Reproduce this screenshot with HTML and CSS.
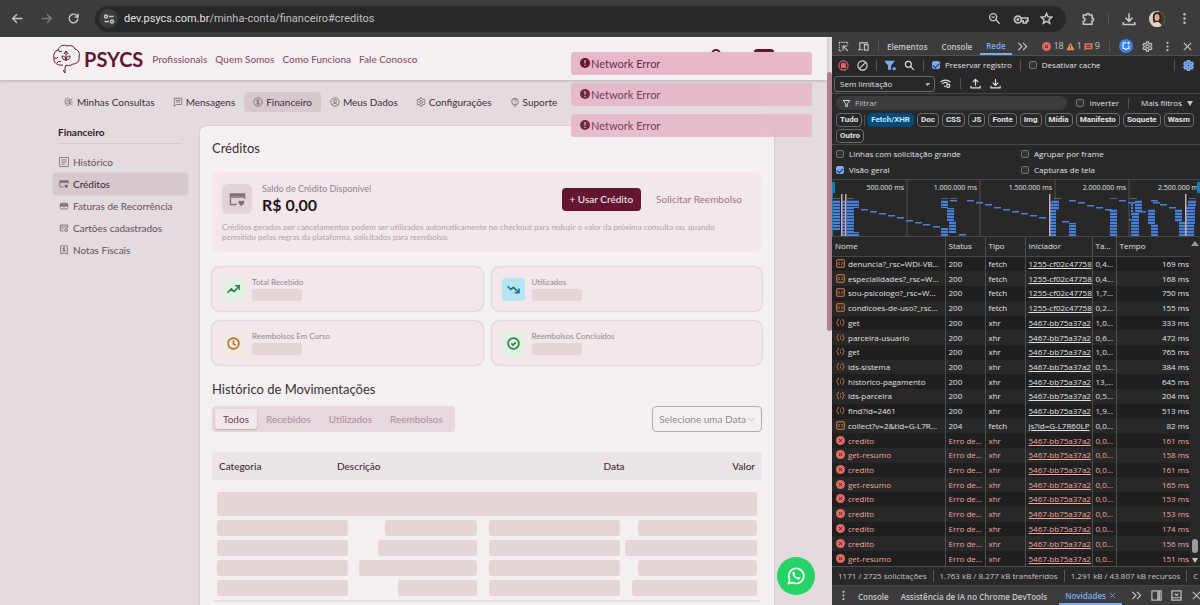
FILE: index.html
```html
<!DOCTYPE html>
<html lang="pt-BR">
<head>
  <meta charset="UTF-8">
  <meta name="viewport" content="width=device-width, initial-scale=1.0">
  <title>PSYCS - Créditos</title>
  <link rel="stylesheet" href="styles.css">
</head>
<body>
  <svg class="sprite" xmlns="http://www.w3.org/2000/svg">
    <symbol id="i-back" viewBox="0 0 24 24"><path d="M21 12H4M11 4l-8 8 8 8"/></symbol>
    <symbol id="i-reload" viewBox="0 0 24 24"><path d="M20 12a8 8 0 1 1-2.500-5.800L20 9M20.500 3v6.500H14"/></symbol>
    <symbol id="i-tune" viewBox="0 0 24 24"><circle cx="6" cy="7" r="3"/><path d="M12 7h9M3 17h9"/><circle cx="18" cy="17" r="3"/></symbol>
    <symbol id="i-search" viewBox="0 0 24 24"><circle cx="9.500" cy="9.500" r="6.500"/><path d="M14.500 14.500l7 7"/></symbol>
    <symbol id="i-zoom" viewBox="0 0 24 24"><circle cx="9.500" cy="9.500" r="6.500"/><path d="M14.500 14.500l7 7M6.500 9.500h6"/></symbol>
    <symbol id="i-key" viewBox="0 0 24 24"><circle cx="7" cy="12" r="5.500"/><circle cx="7" cy="12" r="1"/><path d="M12 9.500h11v5h-2.500v3h-5v-3H12"/></symbol>
    <symbol id="i-star" viewBox="0 0 24 24"><path d="M12 2.500l2.800 6.300 6.900.7-5.200 4.600 1.500 6.800-6-3.500-6 3.500 1.500-6.800-5.200-4.600 6.900-.7z"/></symbol>
    <symbol id="i-puzzle" viewBox="0 0 24 24"><path d="M4 5h5.500a2.500 2.500 0 0 1 5 0H19v5.500a2.500 2.500 0 0 1 0 5V21H4v-5a3 3 0 0 0 0-6z"/></symbol>
    <symbol id="i-down" viewBox="0 0 24 24"><path d="M12 2v13M6 10l6 6 6-6M2 17v4.500h20V17"/></symbol>
    <symbol id="i-up" viewBox="0 0 24 24"><path d="M12 17V3M6 9l6-6 6 6M2 17v4.500h20V17"/></symbol>
    <symbol id="i-dots" viewBox="0 0 24 24"><g fill="currentColor" stroke="none"><circle cx="12" cy="4" r="2.300"/><circle cx="12" cy="12" r="2.300"/><circle cx="12" cy="20" r="2.300"/></g></symbol>
    <symbol id="i-close" viewBox="0 0 24 24"><path d="M4 4l16 16M20 4L4 20"/></symbol>
    <symbol id="i-inspect" viewBox="0 0 24 24"><path d="M2 3h20M3 3v20M21 3v6M3 21h6" stroke-dasharray="3 2"/><path d="M11 20v-9h9M11 11l11 11"/></symbol>
    <symbol id="i-device" viewBox="0 0 24 24"><path d="M4 18V4h18M0 19h11"/><rect x="14" y="8" width="8" height="12"/></symbol>
    <symbol id="i-chevrons" viewBox="0 0 24 24"><path d="M3 4l8 8-8 8M13 4l8 8-8 8"/></symbol>
    <symbol id="i-gear" viewBox="0 0 24 24"><path d="M10 2h4l.7 3 2 1.200 3-1 2 3.500-2.300 2v2.600l2.300 2-2 3.500-3-1-2 1.200-.7 3h-4l-.7-3-2-1.200-3 1-2-3.500 2.300-2v-2.600l-2.300-2 2-3.500 3 1 2-1.200z"/><circle cx="12" cy="12" r="3.500"/></symbol>
    <symbol id="i-record" viewBox="0 0 24 24"><circle cx="12" cy="12" r="10"/><rect x="8" y="8" width="8" height="8" fill="currentColor"/></symbol>
    <symbol id="i-clear" viewBox="0 0 24 24"><circle cx="12" cy="12" r="10"/><path d="M19 5L5 19"/></symbol>
    <symbol id="i-funnel" viewBox="0 0 24 24"><path d="M3 4h18l-7 9v7h-4v-7z"/></symbol>
    <symbol id="i-funnel-on" viewBox="0 0 24 24"><path d="M1 3h18l-7 9v8H8v-8z" fill="currentColor"/><circle cx="20" cy="19" r="3.500" fill="currentColor" stroke="none"/></symbol>
    <symbol id="i-wifi" viewBox="0 0 24 24"><path d="M1 9c6-6 16-6 22 0M5 13c4-4 9-4 12-1.500M9 17l3 3"/><circle cx="18" cy="17" r="3.500"/></symbol>
    <symbol id="i-error" viewBox="0 0 24 24"><circle cx="12" cy="12" r="12" fill="#e46962" stroke="none"/><path d="M8 8l8 8M16 8l-8 8" stroke="#282828"/></symbol>
    <symbol id="i-doc" viewBox="0 0 24 24"><rect x="2" y="2" width="20" height="20" rx="1"/><path d="M10 8l-4 4 4 4M14 8l4 4-4 4"/></symbol>
    <symbol id="i-json" viewBox="0 0 24 24"><path d="M8 3c-5 0-2 7-6 9 4 2 1 9 6 9M16 3c5 0 2 7 6 9-4 2-1 9-6 9"/><path d="M12 7v3M12 13v4"/></symbol>
    <symbol id="i-panel" viewBox="0 0 24 24"><rect x="2" y="2" width="20" height="20"/><path d="M15 2v20M18 2v20"/></symbol>
    <symbol id="i-drawer" viewBox="0 0 24 24"><rect x="2" y="2" width="20" height="20"/><path d="M2 17h20M8 8l4 4 4-4"/></symbol>
    <symbol id="i-psi" viewBox="0 0 24 24"><path d="M9 2C4 3 2 7 3 12c0 5 2 8 6 9M12 3v18M12 7h5l3-3M12 12h9M12 16h5l3 4M8 7v4M7 14v3"/></symbol>
    <symbol id="i-chat" viewBox="0 0 24 24"><path d="M3 3h18v15H8l-5 4zM7 8h10M7 12h10"/></symbol>
    <symbol id="i-coin" viewBox="0 0 24 24"><circle cx="12" cy="12" r="10"/><path d="M15.500 8.500c-1-2-7-2-7 1s7 2 7 5-6 3.500-7.500 1M12 5v14"/></symbol>
    <symbol id="i-user" viewBox="0 0 24 24"><circle cx="12" cy="12" r="10"/><circle cx="12" cy="10" r="3.500"/><path d="M5.500 19c2-5 11-5 13 0"/></symbol>
    <symbol id="i-help" viewBox="0 0 24 24"><circle cx="12" cy="11" r="8"/><path d="M9.500 8c1-3 6-2 5 1-.5 1.500-2.500 2-2.500 4M12 15v1M9 20l3 3 3-3"/></symbol>
    <symbol id="i-list" viewBox="0 0 24 24"><rect x="1" y="1" width="22" height="22" rx="1"/><path d="M6 7h12M6 12h12M6 17h8"/></symbol>
    <symbol id="i-card" viewBox="0 0 24 24"><path d="M11 19H2V4h20v7M2 8.500h20M2 6h20"/><path d="M17.500 21.500c-6-4-4.500-8 -2-8 1.200 0 2 1.300 2 1.300s.8-1.300 2-1.300c2.500 0 4 4-2 8z" fill="currentColor" stroke="none"/></symbol>
    <symbol id="i-invoice" viewBox="0 0 24 24"><rect x="3" y="5" width="18" height="14" rx="3"/><path d="M3 8h18M3 11h5l1 2h6l1-2h5" stroke-width="3"/></symbol>
    <symbol id="i-cardgear" viewBox="0 0 24 24"><path d="M11 19H3V5h18v6M3 9.500h18M6 14h4"/><circle cx="17" cy="17" r="3.500"/><path d="M17 12v2M17 20v2"/></symbol>
    <symbol id="i-receipt" viewBox="0 0 24 24"><path d="M4 2h16v20l-3-2H7l-3 2z"/><path d="M15 7.500c-1-1.500-6-1.500-6 1s6 2 6 4.500-5 3-6.500 1M12 5v12"/></symbol>
    <symbol id="i-trendup" viewBox="0 0 24 24"><path d="M1 18l7-7 5 5 9-10M15 5h8v8"/></symbol>
    <symbol id="i-trenddown" viewBox="0 0 24 24"><path d="M1 6l6 6 5-4 9 9M22 10v8h-8"/></symbol>
    <symbol id="i-clock" viewBox="0 0 24 24"><circle cx="12" cy="12" r="10"/><path d="M12 6v7l4 2"/></symbol>
    <symbol id="i-check" viewBox="0 0 24 24"><circle cx="12" cy="12" r="10"/><path d="M8 12l3 3 5-5"/></symbol>
    <symbol id="i-alert" viewBox="0 0 24 24"><circle cx="12" cy="12" r="12" fill="#641532" stroke="none"/><path d="M12 5v8M12 16v3" stroke="#e6b8ca" stroke-width="3"/></symbol>
  </svg>

  <div class="toolbar">
    <button class="icon-btn" aria-label="Voltar"><svg><use href="#i-back"/></svg></button>
    <button class="icon-btn dim flip" aria-label="Avançar"><svg><use href="#i-back"/></svg></button>
    <button class="icon-btn" aria-label="Recarregar"><svg><use href="#i-reload"/></svg></button>
    <div class="omnibox">
      <span class="site-info"><svg><use href="#i-tune"/></svg></span>
      <span class="url">dev.psycs.com.br<span class="path">/minha-conta/financeiro#creditos</span></span>
      <button class="icon-btn" aria-label="Zoom"><svg><use href="#i-zoom"/></svg></button>
      <button class="icon-btn wide" aria-label="Senhas"><svg><use href="#i-key"/></svg></button>
      <button class="icon-btn" aria-label="Favoritos"><svg><use href="#i-star"/></svg></button>
    </div>
    <div class="toolbar-end">
      <button class="icon-btn big" aria-label="Extensões"><svg><use href="#i-puzzle"/></svg></button>
      <span class="bar"></span>
      <button class="icon-btn big" aria-label="Downloads"><svg><use href="#i-down"/></svg></button>
      <svg class="avatar" viewBox="0 0 16 16">
        <defs><clipPath id="face"><circle cx="8" cy="8" r="8"/></clipPath></defs>
        <g clip-path="url(#face)">
          <rect width="16" height="16" fill="#d9cfc9"/>
          <rect x="10" width="6" height="16" fill="#37402f"/>
          <path d="M4 9C3 2 6 1 8 1s5 2 4 9l-1 3H5z" fill="#3a1d1a"/>
          <ellipse cx="8" cy="6.500" rx="2.500" ry="3.500" fill="#e0a893"/>
          <path d="M3 16c0-4 3-5 5-5s4 1 5 5z" fill="#e8d5cc"/>
        </g>
      </svg>
      <button class="icon-btn" aria-label="Menu"><svg><use href="#i-dots"/></svg></button>
    </div>
  </div>

  <div class="window">
    <div class="page">
      <header class="site-header">
        <a class="logo" href="#">
          <svg viewBox="0 0 27 30">
            <path d="M10 21C4 22 0 18 1 14c-1-4 1-7 4-8 1-4 6-6 9-4 4-1 7 0 8 3 4 1 5 5 4 8 1 4-2 7-6 7-3 2-6 2-7 1l-1 3v5l-2-3M5 6c1 2 3 2 4 1M1 14c2 1 3 0 4-1M4 19c1-2 3-2 4-1"/>
            <path d="M13 17V8M13 16c-3 0-4-2-4-4 2 0 4 1 4 4 0-3 2-4 4-4 0 2-1 4-4 4M11 10l2-3 2 3"/>
          </svg>
          <span>PSYCS</span>
        </a>
        <nav class="main-nav">
          <a href="#">Profissionais</a>
          <a href="#">Quem Somos</a>
          <a href="#">Como Funciona</a>
          <a href="#">Fale Conosco</a>
        </nav>
        <div class="header-actions">
          <svg viewBox="0 0 10 20"><path d="M1 14V5a4 4 0 0 1 8 0v9z"/></svg>
          <button class="menu-btn" aria-label="Abrir menu"></button>
        </div>
      </header>

      <nav class="account-nav">
        <a href="#"><svg><use href="#i-psi"/></svg>Minhas Consultas</a>
        <a href="#"><svg><use href="#i-chat"/></svg>Mensagens</a>
        <a href="#" class="active"><svg><use href="#i-coin"/></svg>Financeiro</a>
        <a href="#"><svg><use href="#i-user"/></svg>Meus Dados</a>
        <a href="#"><svg><use href="#i-gear"/></svg>Configurações</a>
        <a href="#"><svg><use href="#i-help"/></svg>Suporte</a>
      </nav>

      <div class="content">
        <aside class="sidebar">
          <h2>Financeiro</h2>
          <a href="#"><svg><use href="#i-list"/></svg>Histórico</a>
          <a href="#" class="active"><svg><use href="#i-card"/></svg>Créditos</a>
          <a href="#"><svg><use href="#i-invoice"/></svg>Faturas de Recorrência</a>
          <a href="#"><svg><use href="#i-cardgear"/></svg>Cartões cadastrados</a>
          <a href="#"><svg><use href="#i-receipt"/></svg>Notas Fiscais</a>
        </aside>

        <main class="panel">
          <h1>Créditos</h1>
          <section class="balance">
            <div class="balance-top">
              <span class="balance-icon"><svg><use href="#i-card"/></svg></span>
              <div class="balance-text">
                <p class="label">Saldo de Crédito Disponível</p>
                <p class="amount">R$ 0,00</p>
              </div>
              <button class="primary">+ Usar Crédito</button>
              <button class="ghost">Solicitar Reembolso</button>
            </div>
            <p class="note">Créditos gerados por cancelamentos podem ser utilizados automaticamente no checkout para reduzir o valor da próxima consulta ou, quando permitido pelas regras da plataforma, solicitados para reembolso.</p>
          </section>

          <section class="stats">
            <div class="stat"><span class="stat-icon green"><svg><use href="#i-trendup"/></svg></span><div><p>Total Recebido</p><span class="skel"></span></div></div>
            <div class="stat"><span class="stat-icon blue"><svg><use href="#i-trenddown"/></svg></span><div><p>Utilizados</p><span class="skel"></span></div></div>
            <div class="stat"><span class="stat-icon orange"><svg><use href="#i-clock"/></svg></span><div><p>Reembolsos Em Curso</p><span class="skel"></span></div></div>
            <div class="stat"><span class="stat-icon green"><svg><use href="#i-check"/></svg></span><div><p>Reembolsos Concluídos</p><span class="skel"></span></div></div>
          </section>

          <h1>Histórico de Movimentações</h1>
          <div class="filters">
            <div class="tabs">
              <button class="active">Todos</button>
              <button>Recebidos</button>
              <button>Utilizados</button>
              <button>Reembolsos</button>
            </div>
            <button class="date-btn">Selecione uma Data<svg viewBox="0 0 24 24"><path d="M3 8l9 9 9-9"/></svg></button>
          </div>

          <table class="moves">
            <thead>
              <tr><th>Categoria</th><th>Descrição</th><th>Data</th><th>Valor</th></tr>
            </thead>
          </table>
          <div class="loading" id="loading">
            <span class="skel head"></span>
          </div>
        </main>
      </div>

      <div class="toasts">
        <div class="toast"><svg><use href="#i-alert"/></svg>Network Error</div>
        <div class="toast faded"><svg><use href="#i-alert"/></svg>Network Error</div>
        <div class="toast faded"><svg><use href="#i-alert"/></svg>Network Error</div>
      </div>
      <a class="whatsapp" href="#" aria-label="WhatsApp">
        <svg viewBox="0 0 24 24"><path d="M3 21l1.400-4.800A9 9 0 1 1 8 19.800z" fill="none" stroke="#fff" stroke-width="2"/><path d="M8.500 7c-1.500 1-1.200 3 .8 5.700 2 2.600 4.800 4 6.500 3.300 1-.4 1.500-1.500 1.200-2l-2.300-1.200-1.200 1.300c-1.600-.5-2.800-1.800-3.400-3.200l.9-1.200L10 7.200z" fill="#fff"/></svg>
      </a>
      <div class="scrollbar"></div>
    </div>

    <div class="devtools">
      <div class="dt-row dt-tabs">
        <svg><use href="#i-inspect"/></svg>
        <svg><use href="#i-device"/></svg>
        <span class="bar"></span>
        <button>Elementos</button>
        <button>Console</button>
        <button class="active">Rede</button>
        <svg><use href="#i-chevrons"/></svg>
        <div class="counts">
          <svg><use href="#i-error"/></svg>18
          <svg viewBox="0 0 24 24"><path d="M12 2l11 20H1z" fill="#ee9255" stroke="none"/><path d="M12 9v6M12 17v2" stroke="#333"/></svg>1
          <svg viewBox="0 0 24 24"><path d="M1 3h22v16H7l-6 4z" fill="#e46962" stroke="none"/><path d="M6 9h12M6 14h12" stroke="#333"/></svg>9
        </div>
        <span class="bar"></span>
        <span class="ai"><svg viewBox="0 0 24 24"><path d="M13 4H5v14h4l3 3 3-3h4v-7M18 2v6M15 5h6"/></svg></span>
        <svg><use href="#i-gear"/></svg>
        <svg><use href="#i-dots"/></svg>
        <svg><use href="#i-close"/></svg>
      </div>

      <div class="dt-row dt-tools">
        <svg class="red"><use href="#i-record"/></svg>
        <svg><use href="#i-clear"/></svg>
        <span class="bar"></span>
        <svg class="accent"><use href="#i-funnel-on"/></svg>
        <svg><use href="#i-search"/></svg>
        <span class="bar"></span>
        <label><input type="checkbox" checked>Preservar registro</label>
        <span class="bar"></span>
        <label><input type="checkbox">Desativar cache</label>
        <span class="bar push"></span>
        <svg class="accent settings"><use href="#i-gear"/></svg>
      </div>

      <div class="dt-row dt-throttle">
        <select aria-label="Limitação"><option>Sem limitação</option></select>
        <svg><use href="#i-wifi"/></svg>
        <span class="bar"></span>
        <svg><use href="#i-up"/></svg>
        <svg><use href="#i-down"/></svg>
      </div>

      <div class="dt-filter">
        <div class="dt-row">
          <span class="search"><svg><use href="#i-funnel"/></svg><input type="text" placeholder="Filtrar" aria-label="Filtrar"></span>
          <label><input type="checkbox">Inverter</label>
          <span class="bar"></span>
          <button class="more">Mais filtros<span class="caret"></span></button>
        </div>
        <div class="chips">
          <button>Tudo</button><span class="bar"></span><button class="active">Fetch/XHR</button><button>Doc</button><button>CSS</button><button>JS</button><button>Fonte</button><button>Img</button><button>Mídia</button><button>Manifesto</button><button>Soquete</button><button>Wasm</button><button>Outro</button>
        </div>
      </div>

      <div class="dt-options">
        <label><input type="checkbox">Linhas com solicitação grande</label>
        <label><input type="checkbox">Agrupar por frame</label>
        <label><input type="checkbox" checked>Visão geral</label>
        <label><input type="checkbox">Capturas de tela</label>
      </div>

      <div class="timeline">
        <div class="ticks"><span>500.000 ms</span><span>1.000.000 ms</span><span>1.500.000 ms</span><span>2.000.000 ms</span><span>2.500.000 m</span></div>
        <svg id="bars" viewBox="0 0 368 56" preserveAspectRatio="none">
          <defs><pattern id="stripes" width="8" height="3" patternUnits="userSpaceOnUse"><rect width="8" height="2" fill="#4a80d8"/><rect y="2" width="8" height="1" fill="#2b3f63"/></pattern></defs>
        </svg>
      </div>

      <div class="requests">
        <div class="grid">
          <table>
            <thead><tr><th class="c-name">Nome</th><th class="c-status">Status</th><th class="c-type">Tipo</th><th class="c-init">Iniciador</th><th class="c-size">Ta...</th><th>Tempo</th></tr></thead>
            <tbody id="rows"></tbody>
          </table>
        </div>
        <div class="grid-scroll"><span class="arrow-up"></span><span class="thumb"></span><span class="arrow-down"></span></div>
      </div>

      <div class="dt-status"><span>1171 / 2725 solicitações</span><span>1.763 kB / 8.277 kB transferidos</span><span>1.291 kB / 43.807 kB recursos</span><span>C</span></div>

      <div class="dt-row dt-drawer">
        <svg><use href="#i-dots"/></svg>
        <button>Console</button>
        <button>Assistência de IA no Chrome DevTools</button>
        <button class="active">Novidades<svg><use href="#i-close"/></svg></button>
        <svg><use href="#i-chevrons"/></svg>
        <svg><use href="#i-panel"/></svg>
        <svg><use href="#i-drawer"/></svg>
        <svg><use href="#i-close"/></svg>
      </div>
    </div>
  </div>

  <script>
    const A = '1255-cf02c47758', B = '5467-bb75a37a2';
    const requests = [
      ['denuncia?_rsc=WDi-VB...', '200', 'fetch', A, '0,4...', '169 ms'],
      ['especialidades?_rsc=W...', '200', 'fetch', A, '0,4...', '168 ms'],
      ['sou-psicologo?_rsc=W...', '200', 'fetch', A, '1,7...', '750 ms'],
      ['condicoes-de-uso?_rsc...', '200', 'fetch', A, '0,2...', '155 ms'],
      ['get', '200', 'xhr', B, '1,0...', '333 ms'],
      ['parceira-usuario', '200', 'xhr', B, '0,6...', '472 ms'],
      ['get', '200', 'xhr', B, '1,0...', '765 ms'],
      ['ids-sistema', '200', 'xhr', B, '0,5...', '384 ms'],
      ['historico-pagamento', '200', 'xhr', B, '13,...', '645 ms'],
      ['ids-parceira', '200', 'xhr', B, '0,5...', '204 ms'],
      ['find?id=2461', '200', 'xhr', B, '1,9...', '513 ms'],
      ['collect?v=2&tid=G-L7R...', '204', 'fetch', 'js?id=G-L7R60LP', '0,0...', '82 ms'],
      ['credito', 'Erro de...', 'xhr', B, '0,0...', '161 ms'],
      ['get-resumo', 'Erro de...', 'xhr', B, '0,0...', '158 ms'],
      ['credito', 'Erro de...', 'xhr', B, '0,0...', '161 ms'],
      ['get-resumo', 'Erro de...', 'xhr', B, '0,0...', '165 ms'],
      ['credito', 'Erro de...', 'xhr', B, '0,0...', '153 ms'],
      ['credito', 'Erro de...', 'xhr', B, '0,0...', '153 ms'],
      ['credito', 'Erro de...', 'xhr', B, '0,0...', '174 ms'],
      ['credito', 'Erro de...', 'xhr', B, '0,0...', '156 ms'],
      ['get-resumo', 'Erro de...', 'xhr', B, '0,0...', '151 ms']
    ];

    const rows = document.getElementById('rows');
    requests.forEach(r => {
      const failed = r[1].startsWith('Erro');
      const icon = failed ? 'error' : r[2] === 'fetch' ? 'doc' : 'json';
      const tr = document.createElement('tr');
      if (failed) tr.className = 'failed';
      r.forEach((value, i) => {
        const td = document.createElement('td');
        if (i === 0) td.innerHTML = `<svg><use href="#i-${icon}"/></svg>`;
        const text = document.createElement(i === 3 ? 'a' : 'span');
        if (i === 3) text.href = '#';
        text.textContent = value;
        td.appendChild(text);
        tr.appendChild(td);
      });
      rows.appendChild(tr);
    });

    // timeline: blocks are [x, y, width, height], dashes are [x, y]
    const blocks = [[1,20,7,30],[10,20,4,36],[15,20,7,36],[20,20,7,8],[20,52,7,4],[109,20,7,8],[115,28,7,13],[117,41,7,12],[109,48,7,8],[217,22,7,34],[220,20,7,10],[237,43,7,13],[278,29,7,27],[299,22,2,13],[303,20,7,12],[300,32,7,9],[299,41,8,15],[316,29,7,15],[319,44,7,12],[343,29,7,13],[347,42,7,14],[356,20,8,6],[354,26,9,18],[354,44,8,12]];
    const dashes = [[29,29],[38,31],[47,33],[56,35],[65,37],[74,40],[83,42],[91,44],[101,46],[118,20],[127,54],[135,20],[144,22],[153,24],[162,27],[171,29],[180,31],[189,33],[198,35],[207,37],[230,41],[237,20],[246,22],[255,25],[264,27],[273,29],[287,20],[296,22],[297,39],[307,31],[319,20],[321,22],[328,24],[337,27]];
    const grays = [[1,18],[15,18],[109,18],[118,18],[222,18],[278,18],[298,18],[357,18]];
    const bars = document.getElementById('bars');
    function rect(x, y, width, height, fill) {
      const el = document.createElementNS('http://www.w3.org/2000/svg', 'rect');
      Object.entries({ x, y, width, height, fill }).forEach(([k, v]) => el.setAttribute(k, v));
      bars.appendChild(el);
    }
    blocks.forEach(b => rect(...b, 'url(#stripes)'));
    dashes.forEach(([x, y]) => rect(x, y, 7, 1.5, '#4a80d8'));
    grays.forEach(([x, y]) => rect(x, y, 7, 1, '#666'));
    [9, 13, 217, 353].forEach(x => rect(x, 14, 1.5, 42, '#c9a9b4'));
    rect(0, 8, 1, 48, '#0b84b5');
    rect(0, 2, 3, 11, '#0b84b5');
    rect(365, 2, 3, 11, '#0b84b5');

    // placeholder lines: share of the cell that each bar fills
    const loading = document.getElementById('loading');
    [[74, 90], [80, 100], [95, 90], [64, 95]].forEach(([second, fourth]) => {
      [100, second, 95, fourth].forEach(width => {
        const el = document.createElement('span');
        el.className = 'skel';
        el.style.width = width + '%';
        loading.appendChild(el);
      });
    });
  </script>
</body>
</html>
```
FILE: styles.css
```css
* {
  box-sizing: border-box;
}
body {
  margin: 0;
  height: 100vh;
  display: flex;
  flex-direction: column;
  overflow: hidden;
  background: #3c3c3c;
  font-family: Lato, "Open Sans", sans-serif;
}
h1, h2, p {
  margin: 0;
}
a {
  color: inherit;
  text-decoration: none;
}
button {
  border: none;
  background: none;
  padding: 0;
  color: inherit;
  font: inherit;
  white-space: nowrap;
}
svg {
  flex: none;
  fill: none;
  stroke: currentColor;
  stroke-width: 2;
}
.sprite {
  display: none;
}

/* Browser toolbar */
.toolbar {
  height: 37px;
  flex: none;
  display: flex;
  align-items: center;
  padding: 0 8px 0 11px;
  color: #c7c7c7;
}
.icon-btn {
  width: 14px;
  height: 14px;
  margin-right: 14px;
}
.icon-btn svg {
  display: block;
  width: 13px;
  height: 13px;
  stroke-width: 2.6;
}
.icon-btn.wide svg {
  width: 16px;
  height: 15px;
}
.icon-btn.big svg {
  width: 14px;
  height: 14px;
}
.dim {
  color: #7c7c7c;
}
.flip {
  transform: scaleX(-1);
}
.omnibox {
  flex: 1;
  height: 26px;
  display: flex;
  align-items: center;
  padding: 0 7px 0 4px;
  border-radius: 13px;
  background: #282828;
}
.omnibox .icon-btn {
  margin: 0 5px 0 6px;
}
.omnibox .wide {
  width: 16px;
}
.site-info {
  width: 19px;
  height: 19px;
  display: grid;
  place-items: center;
  border-radius: 50%;
  background: #3c3c3c;
}
.site-info svg {
  width: 12px;
  height: 12px;
  stroke-width: 3;
}
.url {
  flex: 1;
  margin-left: 6px;
  font: 11px Roboto, "Open Sans", sans-serif;
  color: #e3e3e3;
}
.path {
  color: #c0c0c0;
}
.toolbar-end {
  display: flex;
  align-items: center;
  gap: 13px;
  margin-left: 15px;
}
.toolbar-end .icon-btn {
  margin: 0;
}
.avatar {
  width: 16px;
  height: 16px;
  stroke: none;
}
.bar {
  width: 1px;
  height: 11px;
  flex: none;
  background: #555;
}

.window {
  flex: 1;
  min-height: 0;
  display: flex;
}

/* Site */
.page {
  flex: 1;
  min-width: 0;
  position: relative;
  overflow: hidden;
  padding-right: 5px;
  background: #e4dbdf;
  color: #3b2f35;
  font-size: 10px;
}
.site-header {
  height: 43px;
  display: flex;
  align-items: center;
  padding: 0 53px;
  background: #f4f0f2;
  box-shadow: 0 1px 3px #0003;
}
.logo {
  display: flex;
  align-items: center;
  gap: 4px;
  color: #641532;
  font-size: 20px;
  font-weight: 700;
  line-height: 28px;
}
.logo svg {
  width: 27px;
  height: 30px;
  stroke-width: 1;
}
.main-nav {
  display: flex;
  gap: 8px;
  margin-left: 9px;
  color: #8b5068;
  font-weight: 500;
}
.header-actions {
  display: flex;
  gap: 33px;
  margin-left: auto;
  color: #641532;
}
.header-actions svg {
  width: 10px;
  height: 20px;
}
.menu-btn {
  width: 20px;
  height: 20px;
  border-radius: 3px;
  background: #641532;
}
.account-nav {
  display: flex;
  padding: 12px 53px 0 55px;
}
.account-nav a {
  height: 20px;
  display: flex;
  align-items: center;
  gap: 3px;
  padding: 0 9px;
  border-radius: 4px;
  white-space: nowrap;
}
.account-nav .active {
  background: #d7c8cf;
}
.account-nav svg, .sidebar svg {
  width: 10px;
  height: 10px;
  color: #75666d;
}
.content {
  display: flex;
  gap: 12px;
  padding: 14px 53px 0;
}
.sidebar {
  width: 135px;
  flex: none;
}
.sidebar h2 {
  height: 18px;
  margin: 0 6px 7px 5px;
  border-bottom: 1px solid #d3c8cd;
  color: #2a1f25;
  font-size: 10px;
  line-height: 12px;
}
.sidebar a {
  height: 22px;
  display: flex;
  align-items: center;
  gap: 4px;
  padding-left: 6px;
  border-radius: 4px;
  color: #5d5157;
}
.sidebar .active {
  background: #d7c8cf;
  box-shadow: 0 0 2px #0002;
  color: #33272d;
}
.panel {
  flex: 1;
  height: 640px;
  padding: 12px;
  border-radius: 6px;
  background: #f4f0f2;
  box-shadow: 0 0 2px #0003;
}
.panel h1 {
  font-size: 13px;
  font-weight: 400;
  line-height: 20px;
}
.balance {
  height: 80px;
  margin-top: 14px;
  padding: 11px 10px;
  border-radius: 6px;
  background: #f2e8eb;
}
.balance-top {
  display: flex;
  align-items: center;
  gap: 10px;
}
.balance-icon {
  width: 30px;
  height: 30px;
  display: grid;
  place-items: center;
  border-radius: 6px;
  background: #e2d2d9;
  color: #857179;
}
.balance-icon svg {
  width: 17px;
  height: 17px;
}
.balance-text {
  margin-right: auto;
}
.label {
  color: #91868b;
  font-size: 9px;
  line-height: 12px;
}
.amount {
  color: #1d1418;
  font-size: 16px;
  font-weight: 700;
  line-height: 20px;
}
.primary {
  height: 23px;
  padding: 0 8px;
  border-radius: 4px;
  background: #641532;
  color: #f4e9ed;
  font-weight: 500;
}
.ghost {
  padding: 0 10px 0 5px;
  color: #9b7585;
}
.note {
  max-width: 510px;
  margin-top: 7px;
  color: #b0a1a7;
  font-size: 8px;
  line-height: 10px;
}
.stats {
  display: grid;
  grid-template-columns: 1fr 1fr;
  gap: 10px 9px;
  margin: 15px 0 14px;
}
.stat {
  height: 44px;
  display: flex;
  align-items: center;
  gap: 7px;
  padding: 0 10px;
  border-radius: 8px;
  background: #f2e8eb;
  box-shadow: 0 0 2px #0005;
}
.stat p {
  margin-bottom: 2px;
  color: #91868b;
  font-size: 8px;
  line-height: 10px;
}
.stat-icon {
  width: 23px;
  height: 23px;
  display: grid;
  place-items: center;
  border-radius: 4px;
}
.stat-icon svg {
  width: 13px;
  height: 13px;
  stroke-width: 3;
}
.green {
  background: #e2f0e5;
  color: #27873b;
}
.blue {
  background: #b3e5f3;
  color: #216f88;
}
.orange {
  background: #f1eae1;
  color: #b96f2e;
}
.skel {
  display: block;
  border-radius: 3px;
  background: #e4d6d6;
}
.stat .skel {
  width: 50px;
  height: 12px;
}
.filters {
  display: flex;
  justify-content: space-between;
  margin-top: 7px;
}
.tabs {
  height: 26px;
  display: flex;
  padding: 3px;
  border-radius: 4px;
  background: #e6d8de;
  color: #b18b9b;
}
.tabs button {
  padding: 0 9px;
}
.tabs .active {
  padding: 0 8px;
  border-radius: 3px;
  background: #f0e9ec;
  box-shadow: 0 1px 2px #0003;
  color: #7d3853;
}
.date-btn {
  height: 26px;
  padding: 0 6px;
  border: 1px solid #b3acaf;
  border-radius: 4px;
  color: #93898e;
}
.date-btn svg {
  width: 7px;
  height: 7px;
  margin-left: 2px;
}
.moves {
  width: 100%;
  margin-top: 20px;
  border-collapse: collapse;
  table-layout: fixed;
}
.moves th {
  height: 28px;
  padding: 0 7px;
  background: #ebe5e8;
  font-weight: 500;
  text-align: left;
}
.moves th:first-child {
  width: 118px;
}
.moves th:nth-child(2) {
  width: 205px;
}
.moves th:nth-child(3) {
  width: 158px;
  text-align: center;
}
.moves th:last-child {
  text-align: right;
}
.loading {
  display: grid;
  grid-template-columns: 131fr 124fr 138fr 132fr;
  column-gap: 5px;
  row-gap: 4px;
  justify-items: end;
  margin: 12px 2px 0;
  padding: 0 3px 4px;
  border-bottom: 2px solid #e6dde1;
}
.loading .skel {
  height: 16px;
}
.loading .head {
  grid-column: 1 / -1;
  width: 100%;
  height: 24px;
}
.toasts {
  position: absolute;
  top: 15px;
  right: 20px;
  width: 241px;
  display: grid;
  gap: 8px;
}
.toast {
  height: 23px;
  display: flex;
  align-items: center;
  gap: 1px;
  padding-left: 9px;
  border-radius: 3px;
  background: #e6b8ca;
  color: #702a45;
  font-size: 11px;
}
.toast svg {
  width: 10px;
  height: 10px;
  margin-bottom: 2px;
}
.faded {
  opacity: 0.9;
}
.whatsapp {
  position: absolute;
  right: 17px;
  bottom: 10px;
  width: 38px;
  height: 38px;
  display: grid;
  place-items: center;
  border-radius: 50%;
  background: #25d366;
}
.whatsapp svg {
  width: 20px;
  height: 20px;
  stroke: none;
}
.scrollbar {
  position: absolute;
  top: 35px;
  right: 0;
  width: 5px;
  height: 259px;
  border-radius: 3px;
  background: #ac8090;
}

/* DevTools */
.devtools {
  width: 368px;
  flex: none;
  display: flex;
  flex-direction: column;
  overflow: hidden;
  background: #282828;
  color: #e3e3e3;
  font: 8px/12px "Open Sans", "Noto Sans", sans-serif;
}
.devtools svg {
  width: 11px;
  height: 11px;
  stroke-width: 2.5;
}
.dt-row {
  display: flex;
  align-items: center;
  flex: none;
}
.devtools label {
  display: flex;
  align-items: center;
  gap: 5px;
  white-space: nowrap;
}
.devtools input[type="checkbox"] {
  appearance: none;
  width: 8px;
  height: 8px;
  margin: 0;
  border: 1px solid #757575;
  border-radius: 2px;
  background: #333;
}
.devtools input[type="checkbox"]:checked {
  display: grid;
  place-items: center;
  border-color: #7cacf8;
  background: #7cacf8;
}
.devtools input[type="checkbox"]:checked::after {
  content: "";
  width: 3px;
  height: 5px;
  border: solid #1b2b4a;
  border-width: 0 1px 1px 0;
  transform: rotate(45deg);
}
.dt-tabs {
  height: 19px;
  gap: 9px;
  padding: 0 7px 0 6px;
  background: #3c3c3c;
  border-bottom: 1px solid #505050;
  color: #c7c7c7;
}
.dt-tabs button, .dt-drawer button {
  height: 18px;
  padding-top: 2px;
  font-weight: 600;
}
.dt-tabs button {
  padding: 2px 6px 0;
  margin: 0 -4px;
}
.dt-tabs button + button {
  margin-left: -3px;
}
.dt-tabs .bar + button {
  margin-left: -7px;
}
.dt-tabs .active, .dt-drawer .active {
  border-bottom: 2px solid #7cacf8;
  color: #7cacf8;
}
.counts {
  display: flex;
  align-items: center;
  gap: 2px;
  margin-left: auto;
  font-size: 9px;
}
.devtools .counts svg {
  width: 9px;
  height: 9px;
}
.ai {
  width: 14px;
  height: 14px;
  flex: none;
  display: grid;
  place-items: center;
  border-radius: 50%;
  background: #3b82e6;
  color: #fff;
}
.devtools .ai svg {
  width: 10px;
  height: 10px;
}
.dt-tools {
  height: 18px;
  gap: 8px;
  padding: 0 6px;
}
.dt-tools .push {
  margin-left: auto;
}
.red {
  color: #e46962;
}
.accent {
  color: #7cacf8;
}
.devtools .settings {
  stroke-width: 4;
}
.dt-throttle {
  height: 20px;
  gap: 9px;
  padding-left: 2px;
  border-bottom: 1px solid #474747;
}
.dt-throttle select {
  width: 101px;
  height: 16px;
  appearance: none;
  margin-right: -4px;
  padding: 0 5px;
  border: 1px solid #6a6a6a;
  border-radius: 3px;
  background: linear-gradient(45deg, transparent 50%, #aaa 50%) 90px 6px / 3px 3px no-repeat, linear-gradient(-45deg, transparent 50%, #aaa 50%) 93px 6px / 3px 3px no-repeat, #282828;
  color: inherit;
  font: inherit;
}
.dt-filter {
  padding: 2px 4px 0;
  border-bottom: 1px solid #474747;
}
.dt-filter .dt-row {
  gap: 9px;
  padding-right: 3px;
}
.search {
  flex: 1;
  height: 14px;
  display: flex;
  align-items: center;
  gap: 4px;
  padding-left: 6px;
  border-radius: 7px;
  background: #3c3c3c;
}
.search input {
  min-width: 0;
  flex: 1;
  padding: 0;
  border: none;
  background: none;
  color: inherit;
  font: inherit;
}
.search input::placeholder {
  color: #c0c0c0;
}
.devtools .search svg {
  width: 9px;
  height: 9px;
}
.more {
  display: flex;
  align-items: center;
  gap: 5px;
  margin-left: 3px;
}
.caret, .arrow-down {
  border: 3px solid transparent;
  border-top: 5px solid #c7c7c7;
  border-bottom: none;
}
.arrow-up {
  border: 4px solid transparent;
  border-bottom: 5px solid #9a9a9a;
  border-top: none;
}
.chips {
  display: flex;
  flex-wrap: wrap;
  align-items: center;
  gap: 2px 3px;
  padding: 3px 0 1px;
}
.chips .bar {
  margin: 0 -1px;
}
.chips button {
  height: 14px;
  padding: 0 3px;
  border: 1px solid #6a6a6a;
  border-radius: 4px;
  font-family: Roboto, sans-serif;
  font-weight: 700;
  line-height: 12px;
}
.chips .active {
  border-color: #004a77;
  background: #004a77;
  color: #c2e7ff;
}
.dt-options {
  display: grid;
  grid-template-columns: 37fr 35fr;
  padding: 1px 4px;
  border-bottom: 1px solid #474747;
  line-height: 16px;
}
.timeline {
  height: 57px;
  flex: none;
  position: relative;
  overflow: hidden;
  border-bottom: 1px solid #474747;
}
.ticks {
  height: 100%;
  display: grid;
  grid-template-columns: 76px 73px 75px 74px 70px;
}
.ticks span {
  padding: 2px 2px 0 0;
  border-right: 2px solid #3c3c3c;
  font-size: 7px;
  text-align: right;
  white-space: nowrap;
}
.ticks span:last-child {
  border: none;
}
.timeline svg {
  position: absolute;
  inset: 0;
  width: 100%;
  height: 100%;
  stroke: none;
}
.requests {
  flex: 1;
  min-height: 0;
  display: flex;
  overflow: hidden;
  border-bottom: 1px solid #505050;
}
.grid {
  flex: 1;
  overflow: hidden;
}
.grid table {
  width: 100%;
  height: 100%;
  table-layout: fixed;
  border-collapse: collapse;
}
.grid th, .grid td {
  padding: 0 0 0 3px;
  border-right: 1px solid #505050;
  font-weight: 400;
  text-align: left;
  line-height: 12px;
  white-space: nowrap;
  overflow: hidden;
}
.grid th {
  height: 19px;
  border-bottom: 1px solid #474747;
  background: #282828;
}
.grid td:last-child {
  padding-right: 1px;
  border: none;
  text-align: right;
}
.grid th:last-child {
  border-right: none;
}
.grid tbody tr:nth-child(odd) {
  background: #1f1f1f;
}
.grid td svg {
  width: 9px;
  height: 9px;
  margin: 0 3px 0 1px;
  vertical-align: -1px;
  color: #e8834f;
}
.grid a {
  text-decoration: underline;
}
.failed {
  color: #f0a79f;
}
.c-name {
  width: 113px;
}
.c-status, .c-type {
  width: 40px;
}
.c-init {
  width: 67px;
}
.c-size {
  width: 24px;
}
.grid-scroll {
  width: 10px;
  flex: none;
  display: flex;
  flex-direction: column;
  align-items: center;
  padding: 4px 0 3px;
}
.thumb {
  width: 6px;
  height: 14px;
  margin: auto 0 5px;
  border-radius: 3px;
  background: #9a9a9a;
}
.dt-status {
  height: 19px;
  flex: none;
  display: flex;
  align-items: center;
  border-bottom: 1px solid #474747;
  color: #c7c7c7;
  white-space: nowrap;
}
.dt-status span {
  padding: 0 6px;
  border-right: 1px solid #5a5a5a;
}
.dt-status span:last-child {
  padding-right: 0;
  border: none;
}
.dt-drawer {
  height: 19px;
  gap: 9px;
  padding: 0 7px 0 6px;
  background: #3c3c3c;
  color: #c7c7c7;
}
.dt-drawer button + button {
  margin-left: 3px;
}
.dt-drawer .active {
  padding: 2px 6px 0;
}
.devtools .dt-drawer button svg {
  width: 7px;
  height: 7px;
  margin-left: 3px;
}
```
